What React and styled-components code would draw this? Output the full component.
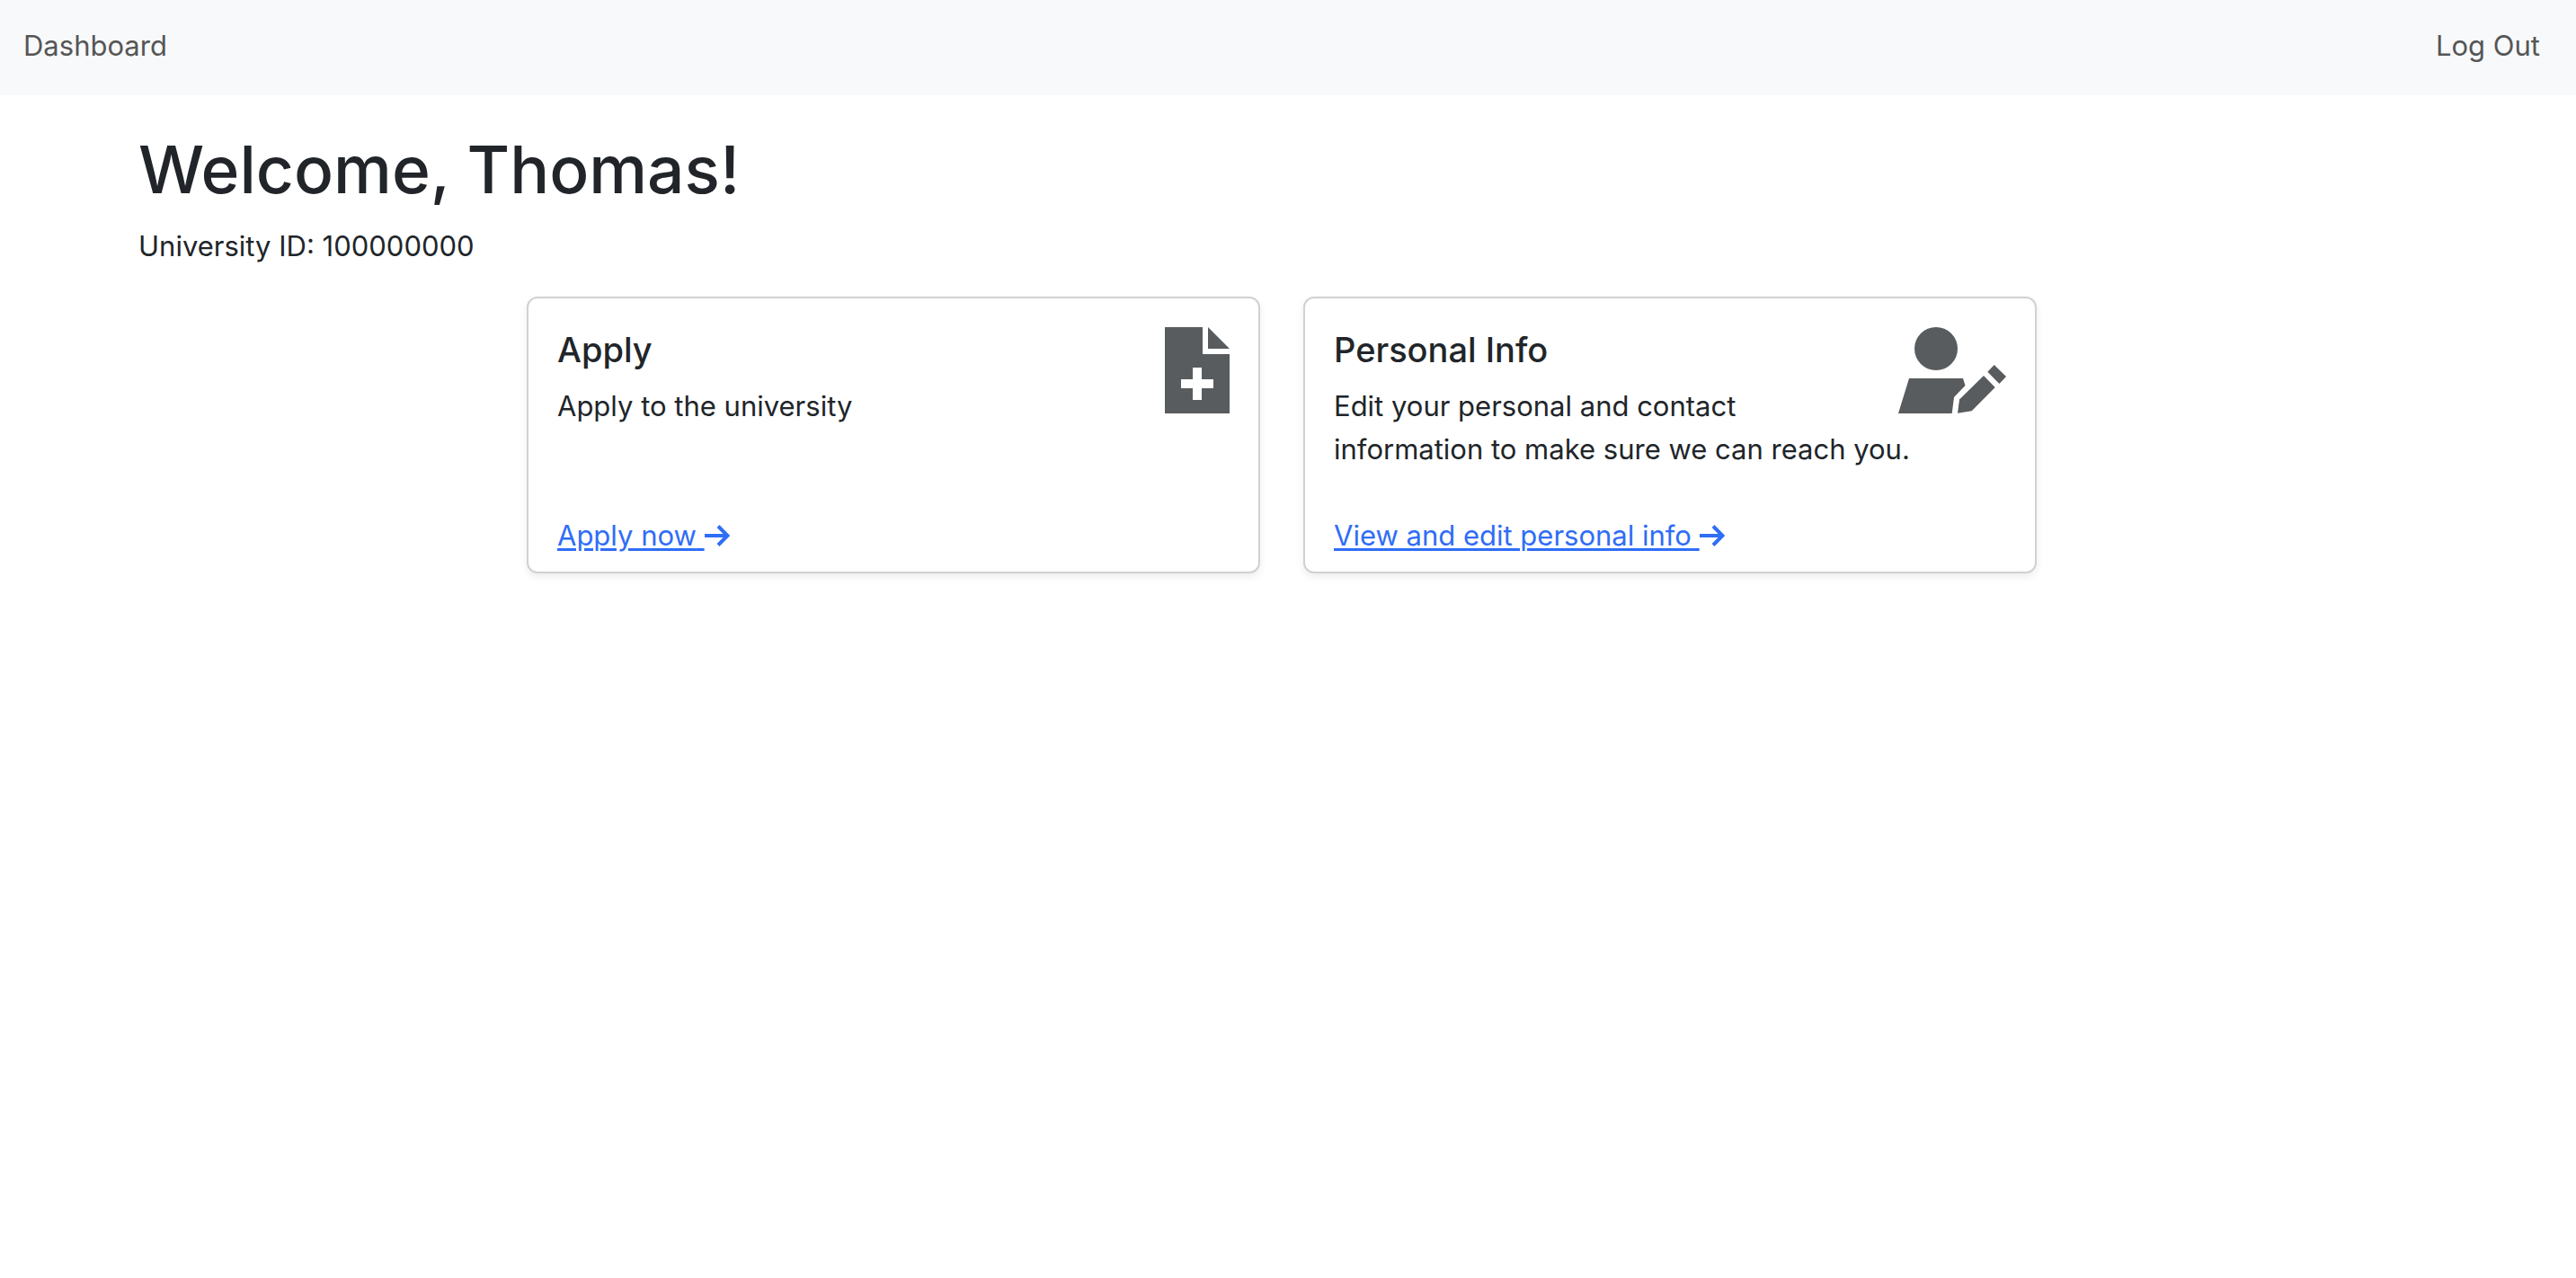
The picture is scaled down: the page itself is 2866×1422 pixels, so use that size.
import React from "react";
import styled, { createGlobalStyle } from "styled-components";

const GlobalStyle = createGlobalStyle`
  *, *::before, *::after { box-sizing: border-box; }
  body {
    margin: 0;
    background: #fff;
    color: #212529;
    font-family: Inter, "Liberation Sans", sans-serif;
    font-size: 31px;
    line-height: 48px;
  }
`;

const NavBar = styled.nav`
  display: flex;
  justify-content: space-between;
  padding: 27px 40px 31px 26px;
  background: #f8f9fa;
`;

const NavLink = styled.a`
  color: #565656;
  text-decoration: none;
`;

const Page = styled.main`
  padding: 34px 14px 48px 0;
`;

const Container = styled.div`
  max-width: 2640px;
  margin: 0 auto;
  padding: 0 48px;
`;

const Heading = styled.h1`
  margin: 0 0 12px;
  font-size: 73px;
  font-weight: 500;
  line-height: 98px;
`;

const UniversityId = styled.p`
  margin: 0 0 32px;
`;

const CardGrid = styled.div`
  display: grid;
  grid-template-columns: repeat(auto-fit, minmax(640px, 1fr));
  gap: 48px;
  max-width: 1680px;
  margin: 0 auto;
`;

const Card = styled.section`
  display: flex;
  flex-direction: column;
  justify-content: space-between;
  gap: 48px;
  padding: 32px 32px 16px;
  border: 2px solid #d1d1d1;
  border-radius: 12px;
  background: #fff;
  box-shadow: 0 4px 8px rgba(0, 0, 0, 0.075);
`;

const CardIcon = styled.svg`
  float: right;
  width: ${(p) => p.$width}px;
  height: 96px;
  margin-left: 32px;
  fill: #585c5e;
`;

const CardTitle = styled.h2`
  margin: 0 0 14px;
  font-size: 38px;
  font-weight: 500;
  line-height: 50px;
`;

const CardText = styled.p`
  margin: 0;
`;

const CardLink = styled.a`
  align-self: flex-start;
  color: #2f6df6;
  text-decoration: underline;
  text-decoration-thickness: 3px;
  text-underline-offset: 3px;
`;

const ArrowIcon = styled.svg`
  width: 28px;
  height: 24px;
  vertical-align: -1px;
  fill: none;
  stroke: currentColor;
  stroke-width: 4;
`;

function Arrow() {
  return (
    <ArrowIcon viewBox="0 0 28 24" aria-hidden="true">
      <path d="M0 12H26M15 1.5L25.5 12L15 22.5" />
    </ArrowIcon>
  );
}

function FileAddIcon() {
  return (
    <CardIcon $width={72} viewBox="0 0 72 96" aria-hidden="true">
      <path
        fillRule="evenodd"
        d="M0 0H42V30H72V96H0ZM31 45V58H18V68H31V81H41V68H54V58H41V45Z"
      />
      <path d="M48 0L72 24H48Z" />
    </CardIcon>
  );
}

function UserEditIcon() {
  return (
    <CardIcon $width={120} viewBox="0 0 120 96" aria-hidden="true">
      <circle cx="42" cy="24" r="24" />
      <path d="M12 57H72L74.5 65L62 78L59.7 96H0Z" />
      <path d="M95 54L107.7 67L81.7 93.3L66 95.7L68 80.5Z" />
      <path d="M106.7 42L120 55L112.4 63L99.3 49.7Z" />
    </CardIcon>
  );
}

const cards = [
  {
    title: "Apply",
    text: "Apply to the university",
    link: "Apply now",
    Icon: FileAddIcon,
  },
  {
    title: "Personal Info",
    text: "Edit your personal and contact information to make sure we can reach you.",
    link: "View and edit personal info",
    Icon: UserEditIcon,
  },
];

export default function App() {
  return (
    <>
      <GlobalStyle />
      <NavBar>
        <NavLink href="#dashboard">Dashboard</NavLink>
        <NavLink href="#logout">Log Out</NavLink>
      </NavBar>
      <Page>
        <Container>
          <Heading>Welcome, Thomas!</Heading>
          <UniversityId>University ID: 100000000</UniversityId>
          <CardGrid>
            {cards.map(({ title, text, link, Icon }) => (
              <Card key={title}>
                <div>
                  <Icon />
                  <CardTitle>{title}</CardTitle>
                  <CardText>{text}</CardText>
                </div>
                <CardLink href="#card">
                  {link} <Arrow />
                </CardLink>
              </Card>
            ))}
          </CardGrid>
        </Container>
      </Page>
    </>
  );
}
